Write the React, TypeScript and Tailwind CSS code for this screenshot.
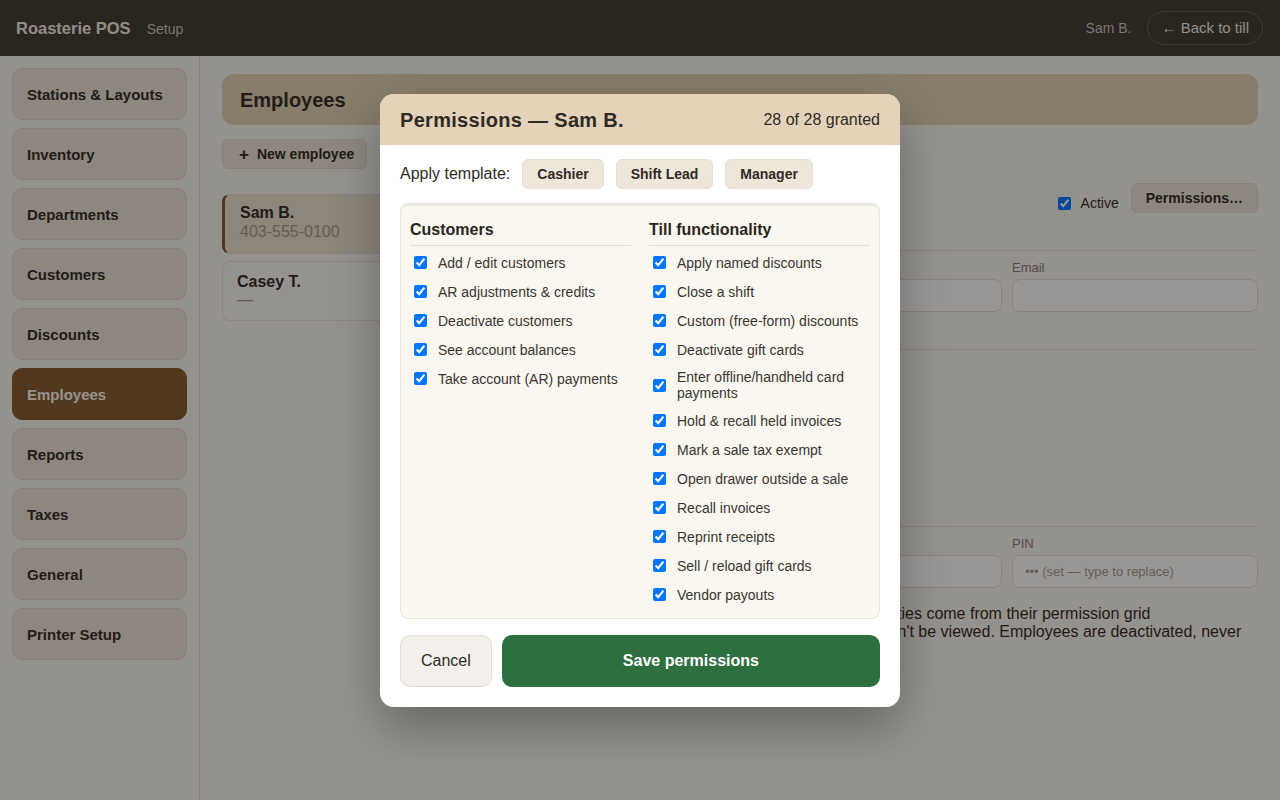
import { useState } from 'react'

const navItems = [
  'Stations & Layouts',
  'Inventory',
  'Departments',
  'Customers',
  'Discounts',
  'Employees',
  'Reports',
  'Taxes',
  'General',
  'Printer Setup',
]

const customerPerms = [
  'Add / edit customers',
  'AR adjustments & credits',
  'Deactivate customers',
  'See account balances',
  'Take account (AR) payments',
]

const tillPerms = [
  'Apply named discounts',
  'Close a shift',
  'Custom (free-form) discounts',
  'Deactivate gift cards',
  'Enter offline/handheld card payments',
  'Hold & recall held invoices',
  'Mark a sale tax exempt',
  'Open drawer outside a sale',
  'Recall invoices',
  'Reprint receipts',
  'Sell / reload gift cards',
  'Vendor payouts',
]

const HIDDEN_GRANTED = 11

function PermColumn({
  title,
  perms,
  granted,
  toggle,
}: {
  title: string
  perms: string[]
  granted: Record<string, boolean>
  toggle: (p: string) => void
}) {
  return (
    <div className="min-w-0">
      <h3 className="border-b border-[#e3ddd3] pt-[7px] pb-[5px] text-[16px] leading-[20px] font-bold text-[#2b2520]">
        {title}
      </h3>
      <div className="mt-[2px] flex flex-col">
        {perms.map((p) => (
          <label key={p} className="flex cursor-pointer items-center gap-2 py-[5px] text-[14px] leading-[16px] text-[#3a3530]">
            <input
              type="checkbox"
              checked={!!granted[p]}
              onChange={() => toggle(p)}
              className="my-[3px] mr-[3px] ml-[4px] h-[13px] w-[13px] shrink-0"
            />
            <span>{p}</span>
          </label>
        ))}
      </div>
    </div>
  )
}

export default function App() {
  const all = [...customerPerms, ...tillPerms]
  const [granted, setGranted] = useState<Record<string, boolean>>(
    Object.fromEntries(all.map((p) => [p, true]))
  )
  const count = all.filter((p) => granted[p]).length + HIDDEN_GRANTED
  const total = all.length + HIDDEN_GRANTED

  function toggle(p: string) {
    setGranted((g) => ({ ...g, [p]: !g[p] }))
  }

  return (
    <div className="relative h-[800px] w-[1280px] overflow-hidden bg-[#f7f3ec] font-['Liberation_Sans',Arial,sans-serif] text-[#3a3028]">
      <header className="flex h-[56px] items-center justify-between bg-[#463e35] pr-[17px] pl-[16px]">
        <div className="flex items-baseline gap-4">
          <span className="text-[16.5px] font-bold text-[#f1ebe2]">Roasterie POS</span>
          <span className="text-[14px] text-[#cbc3b8]">Setup</span>
        </div>
        <div className="flex items-center gap-4">
          <span className="text-[14px] text-[#cbc3b8]">Sam B.</span>
          <button className="h-[34px] rounded-full border border-[#6e6457] px-[13px] text-[15px] text-[#f1ebe2]">
            ← Back to till
          </button>
        </div>
      </header>

      <div className="flex h-[744px]">
        <aside className="w-[200px] shrink-0 border-r border-[#e0d9cf] px-3 pt-3">
          <nav className="flex flex-col gap-2">
            {navItems.map((n) => (
              <div
                key={n}
                className={
                  n === 'Employees'
                    ? 'flex h-[52px] items-center rounded-[10px] border border-[#885c30] bg-[#885c30] px-[14px] pt-[2px] text-[15px] font-bold text-[#fbf4ea]'
                    : 'flex h-[52px] items-center rounded-[10px] border border-[#e2d8cb] bg-[#ebe1d4] px-[14px] pt-[2px] text-[15px] font-bold text-[#3a3028]'
                }
              >
                {n}
              </div>
            ))}
          </nav>
        </aside>

        <main className="flex-1 px-[22px] pt-[18px]">
          <div className="flex h-[51px] items-center rounded-xl bg-[#e3d1b3] px-[18px]">
            <h1 className="text-[20px] font-bold text-[#3a3028]">Employees</h1>
          </div>

          <button className="mt-[14px] flex h-[30px] items-center gap-2 rounded-md border border-[#e2d8cb] bg-[#ebe1d4] pr-[12px] pl-[16px] text-[14px] font-bold text-[#3a3028]">
            <span className="text-[17px] leading-none">+</span> New employee
          </button>

          <div className="mt-[14px] flex gap-[18px]">
            <div className="flex w-[260px] shrink-0 flex-col gap-[7px] pt-[11px]">
              <div className="rounded-lg border border-[#e2d8cb] border-l-[3px] border-l-[#885c30] bg-[#ebdfcd] px-[15px] pt-[9px] pb-[12px] leading-[18px]">
                <div className="text-[16px] font-bold text-[#3a3028]">Sam B.</div>
                <div className="mt-[1px] text-[16px] text-[#a69c91]">403-555-0100</div>
              </div>
              <div className="rounded-lg border border-[#e6ded3] bg-[#f9f6f0] px-[14px] py-[11px] leading-[18px]">
                <div className="text-[16px] font-bold text-[#3a3028]">Casey T.</div>
                <div className="text-[16px] text-[#a69c91]">—</div>
              </div>
            </div>

            <div className="flex-1">
              <div className="flex h-[68px] items-start justify-between border-b border-[#e0d9cf]">
                <h2 className="pt-[6px] text-[22px] font-bold text-[#3a3028]">Sam B.</h2>
                <div className="flex items-start gap-3">
                  <label className="flex items-center gap-[10px] pt-[12px] text-[14px] leading-[16px] text-[#3a3028]">
                    <input type="checkbox" defaultChecked className="h-[13px] w-[13px]" />
                    Active
                  </label>
                  <button className="h-[30px] rounded-md border border-[#e2d8cb] bg-[#ebe1d4] px-[14px] text-[14px] font-bold text-[#3a3028]">
                    Permissions…
                  </button>
                </div>
              </div>

              <div className="grid h-[99px] grid-cols-3 gap-x-[10px] border-b border-[#e0d9cf] pt-[9px]">
                {['Name', 'Phone', 'Email'].map((l) => (
                  <div key={l}>
                    <div className="mb-[3px] text-[13px] leading-[16px] text-[#8a8178]">{l}</div>
                    <div className="h-[33px] rounded-lg border border-[#e3dbd0] bg-[#fdfcf9]" />
                  </div>
                ))}
              </div>

              <div className="h-[177px] border-b border-[#e0d9cf] pt-[10px]">
                <div className="w-[246px]">
                  <div className="mb-[3px] text-[13px] leading-[16px] text-[#8a8178]">Role</div>
                  <div className="h-[33px] rounded-lg border border-[#e3dbd0] bg-[#fdfcf9]" />
                </div>
              </div>

              <div className="grid grid-cols-3 gap-x-[10px] pt-[9px]">
                {['Display name', 'Login code', 'PIN'].map((l) => (
                  <div key={l}>
                    <div className="mb-[3px] text-[13px] leading-[16px] text-[#8a8178]">{l}</div>
                    <div className="flex h-[33px] items-center rounded-lg border border-[#e3dbd0] bg-[#fdfcf9] px-[12px] text-[13px] text-[#a69c91]">
                      {l === 'PIN' ? '••• (set — type to replace)' : ''}
                    </div>
                  </div>
                ))}
              </div>

              <p className="mt-[17px] text-[16px] leading-[18px] whitespace-nowrap text-[#3a3028]">
                Roles are just labels — an employee's actual till capabilities come from their permission grid
                <br />
                PINs are stored hashed, so once a fresh PIN is set, it can't be viewed. Employees are deactivated, never
                <br />
                deleted.
              </p>
            </div>
          </div>
        </main>
      </div>

      <div className="absolute inset-0 flex items-start justify-center bg-black/40 pt-[94px]">
        <div className="w-[520px] overflow-hidden rounded-[14px] bg-white shadow-[0_20px_50px_rgba(0,0,0,0.3)]">
          <div className="flex h-[51px] items-center justify-between bg-[#e4d3b8] px-5">
            <h2 className="text-[20px] font-bold tracking-[0.015em] text-[#2f2a25]">Permissions — Sam B.</h2>
            <span className="text-[16px] text-[#2f2a25]">
              {count} of {total} granted
            </span>
          </div>

          <div className="flex flex-col px-5 pt-[14px] pb-5">
            <div className="flex items-center gap-3">
              <span className="text-[16px] text-[#2f2a25]">Apply template:</span>
              {['Cashier', 'Shift Lead', 'Manager'].map((t) => (
                <button
                  key={t}
                  className="h-[30px] rounded-md border border-[#e7ddd0] bg-[#efe6da] px-[14px] text-[14px] font-bold text-[#2f2a25]"
                >
                  {t}
                </button>
              ))}
            </div>

            <div className="mt-[14px] grid grid-cols-2 gap-[18px] rounded-lg border border-[#ebe5db] bg-[#faf7f0] px-[9px] pt-[9px] pb-[9px] shadow-[inset_0_2px_2px_rgba(0,0,0,0.05)]">
              <PermColumn title="Customers" perms={customerPerms} granted={granted} toggle={toggle} />
              <PermColumn title="Till functionality" perms={tillPerms} granted={granted} toggle={toggle} />
            </div>

            <div className="mt-[16px] flex gap-[10px]">
              <button className="h-[52px] rounded-[10px] border border-[#e3ddd3] bg-[#f3f0eb] px-5 text-[16px] text-[#2f2a25]">
                Cancel
              </button>
              <button className="h-[52px] flex-1 rounded-[10px] bg-[#2e6f40] text-[16px] font-bold text-white">
                Save permissions
              </button>
            </div>
          </div>
        </div>
      </div>
    </div>
  )
}
